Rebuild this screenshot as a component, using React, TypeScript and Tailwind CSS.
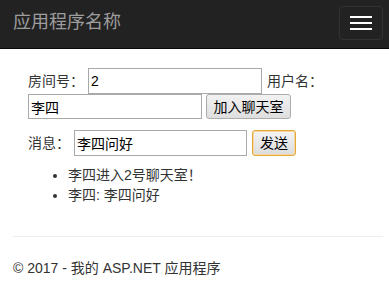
import React from "react";

const font = "font-['Liberation_Sans','Noto_Sans_CJK_SC',sans-serif]";

export default function App() {
    return (
        <div className={`${font} w-[389px] h-[301px] bg-white text-[14px] text-[#333] overflow-hidden`}>
            {/* navbar */}
            <div className="h-[49px] bg-[#222] border-b border-[#080808] flex items-start justify-between">
                <div className="pl-[13px] pt-[11px] text-[18px] leading-[22px] text-[#9d9d9d]">
                    应用程序名称
                </div>
                <button className="mt-[6px] mr-[6px] w-[44px] h-[34px] rounded-[4px] border border-[#333] flex flex-col items-center justify-center gap-[4px]">
                    <span className="block w-[22px] h-[2px] bg-white"></span>
                    <span className="block w-[22px] h-[2px] bg-white"></span>
                    <span className="block w-[22px] h-[2px] bg-white"></span>
                </button>
            </div>

            <div className="pl-[28px] pt-[19px]">
                <div className="flex items-center h-[26px]">
                    <span className="mr-[4px]">房间号：</span>
                    <input
                        className="w-[174px] h-[26px] border border-[#a9a9a9] px-[2px] text-black outline-none"
                        defaultValue="2"
                    />
                    <span className="ml-[5px]">用户名：</span>
                </div>
                <div className="flex items-center h-[25px]">
                    <input
                        className="w-[174px] h-[25px] border border-[#a9a9a9] px-[2px] text-black outline-none"
                        defaultValue="李四"
                    />
                    <button className="ml-[4px] w-[85px] h-[25px] rounded-[3px] border border-[#adadad] bg-gradient-to-b from-[#f2f2f2] to-[#dedede] text-black leading-none">
                        加入聊天室
                    </button>
                </div>
                <div className="flex items-center h-[26px] mt-[11px]">
                    <span className="mr-[4px]">消息：</span>
                    <input
                        className="w-[173px] h-[26px] border border-[#a9a9a9] px-[2px] text-black outline-none"
                        defaultValue="李四问好"
                    />
                    <button className="ml-[5px] w-[44px] h-[26px] rounded-[3px] border border-[#e3a93c] shadow-[inset_0_0_0_1px_#f6d89c] bg-gradient-to-b from-[#f4f4f4] to-[#dcdcdc] text-black leading-none">
                        发送
                    </button>
                </div>
                <ul className="list-disc pl-[40px] mt-[9px] leading-[20px]">
                    <li>李四进入2号聊天室！</li>
                    <li>李四: 李四问好</li>
                </ul>
            </div>

            <hr className="ml-[13px] mr-[6px] mt-[31px] border-t border-[#eee]" />
            <div className="pl-[13px] mt-[21px] leading-[20px]">
                © 2017 - 我的 ASP.NET 应用程序
            </div>
        </div>
    );
}
